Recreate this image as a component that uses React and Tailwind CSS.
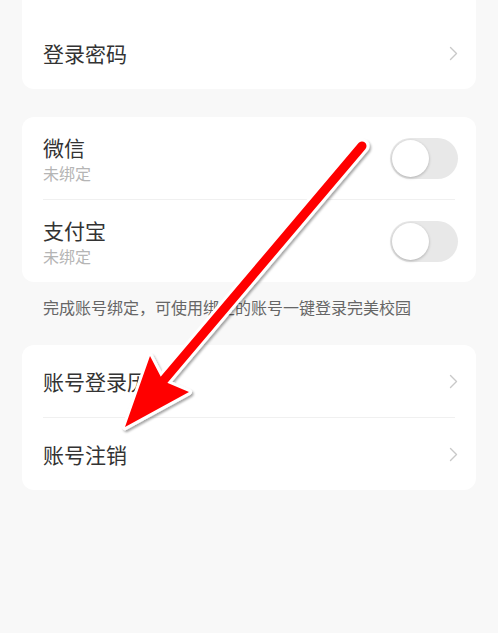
import React from "react";

const font = { fontFamily: '"Noto Sans CJK SC", "Noto Sans", sans-serif' };

function Chevron() {
  return (
    <svg width="9" height="15" viewBox="0 0 9 15" className="shrink-0">
      <polyline points="1.5,1.5 7.5,7.5 1.5,13.5" fill="none" stroke="#c9c9c9" strokeWidth="1.4" strokeLinecap="round" strokeLinejoin="round" />
    </svg>
  );
}

function Toggle() {
  return (
    <div className="w-[68px] h-[41px] rounded-full bg-[#e8e8e8] flex items-center p-[2px] shrink-0">
      <div className="w-[37px] h-[37px] rounded-full bg-white shadow-[0_1px_3px_rgba(0,0,0,0.25)]" />
    </div>
  );
}

function Divider() {
  return <div className="mx-[21px] h-px bg-[#f0f0f0]" />;
}

function NavRow({ label }) {
  return (
    <div className="h-[72px] flex items-center justify-between pl-[21px] pr-[18px]">
      <span className="text-[21px] leading-[28px] text-[#333333]">{label}</span>
      <Chevron />
    </div>
  );
}

function BindRow({ label }) {
  return (
    <div className="h-[82px] flex items-center justify-between pl-[21px] pr-[18px]">
      <div className="flex flex-col">
        <span className="text-[21px] leading-[28px] text-[#333333]">{label}</span>
        <span className="text-[16px] leading-[22px] mt-px text-[#b5b5b5]">未绑定</span>
      </div>
      <Toggle />
    </div>
  );
}

function Arrow() {
  return (
    <svg className="absolute inset-0 pointer-events-none" width="498" height="633" viewBox="0 0 498 633">
      <defs>
        <filter id="sh" x="-20%" y="-20%" width="140%" height="140%">
          <feDropShadow dx="1.5" dy="2" stdDeviation="1.2" floodColor="#000" floodOpacity="0.35" />
        </filter>
      </defs>
      <g filter="url(#sh)">
        <line x1="362" y1="146" x2="163" y2="381" stroke="#ffffff" strokeWidth="15" strokeLinecap="round" />
        <polygon points="125,427 150,356 163,381 189,392" fill="#ffffff" stroke="#ffffff" strokeWidth="6" strokeLinejoin="round" />
      </g>
      <line x1="362" y1="146" x2="163" y2="381" stroke="#ff0000" strokeWidth="9" strokeLinecap="round" />
      <polygon points="125,427 150,356 163,381 189,392" fill="#ff0000" />
    </svg>
  );
}

export default function App() {
  return (
    <div className="relative w-[498px] h-[633px] bg-[#f8f8f8] overflow-hidden px-[22px]" style={font}>
      <div className="bg-white rounded-b-[12px] h-[89px] flex flex-col justify-end">
        <NavRow label="登录密码" />
      </div>

      <div className="mt-[28px] bg-white rounded-[12px]">
        <BindRow label="微信" />
        <Divider />
        <BindRow label="支付宝" />
      </div>

      <p className="pt-[14px] pl-[21px] text-[16px] leading-[22px] text-[#666666]">
        完成账号绑定，可使用绑定的账号一键登录完美校园
      </p>

      <div className="mt-[27px] bg-white rounded-[12px]">
        <NavRow label="账号登录历史" />
        <Divider />
        <NavRow label="账号注销" />
      </div>

      <Arrow />
    </div>
  );
}
